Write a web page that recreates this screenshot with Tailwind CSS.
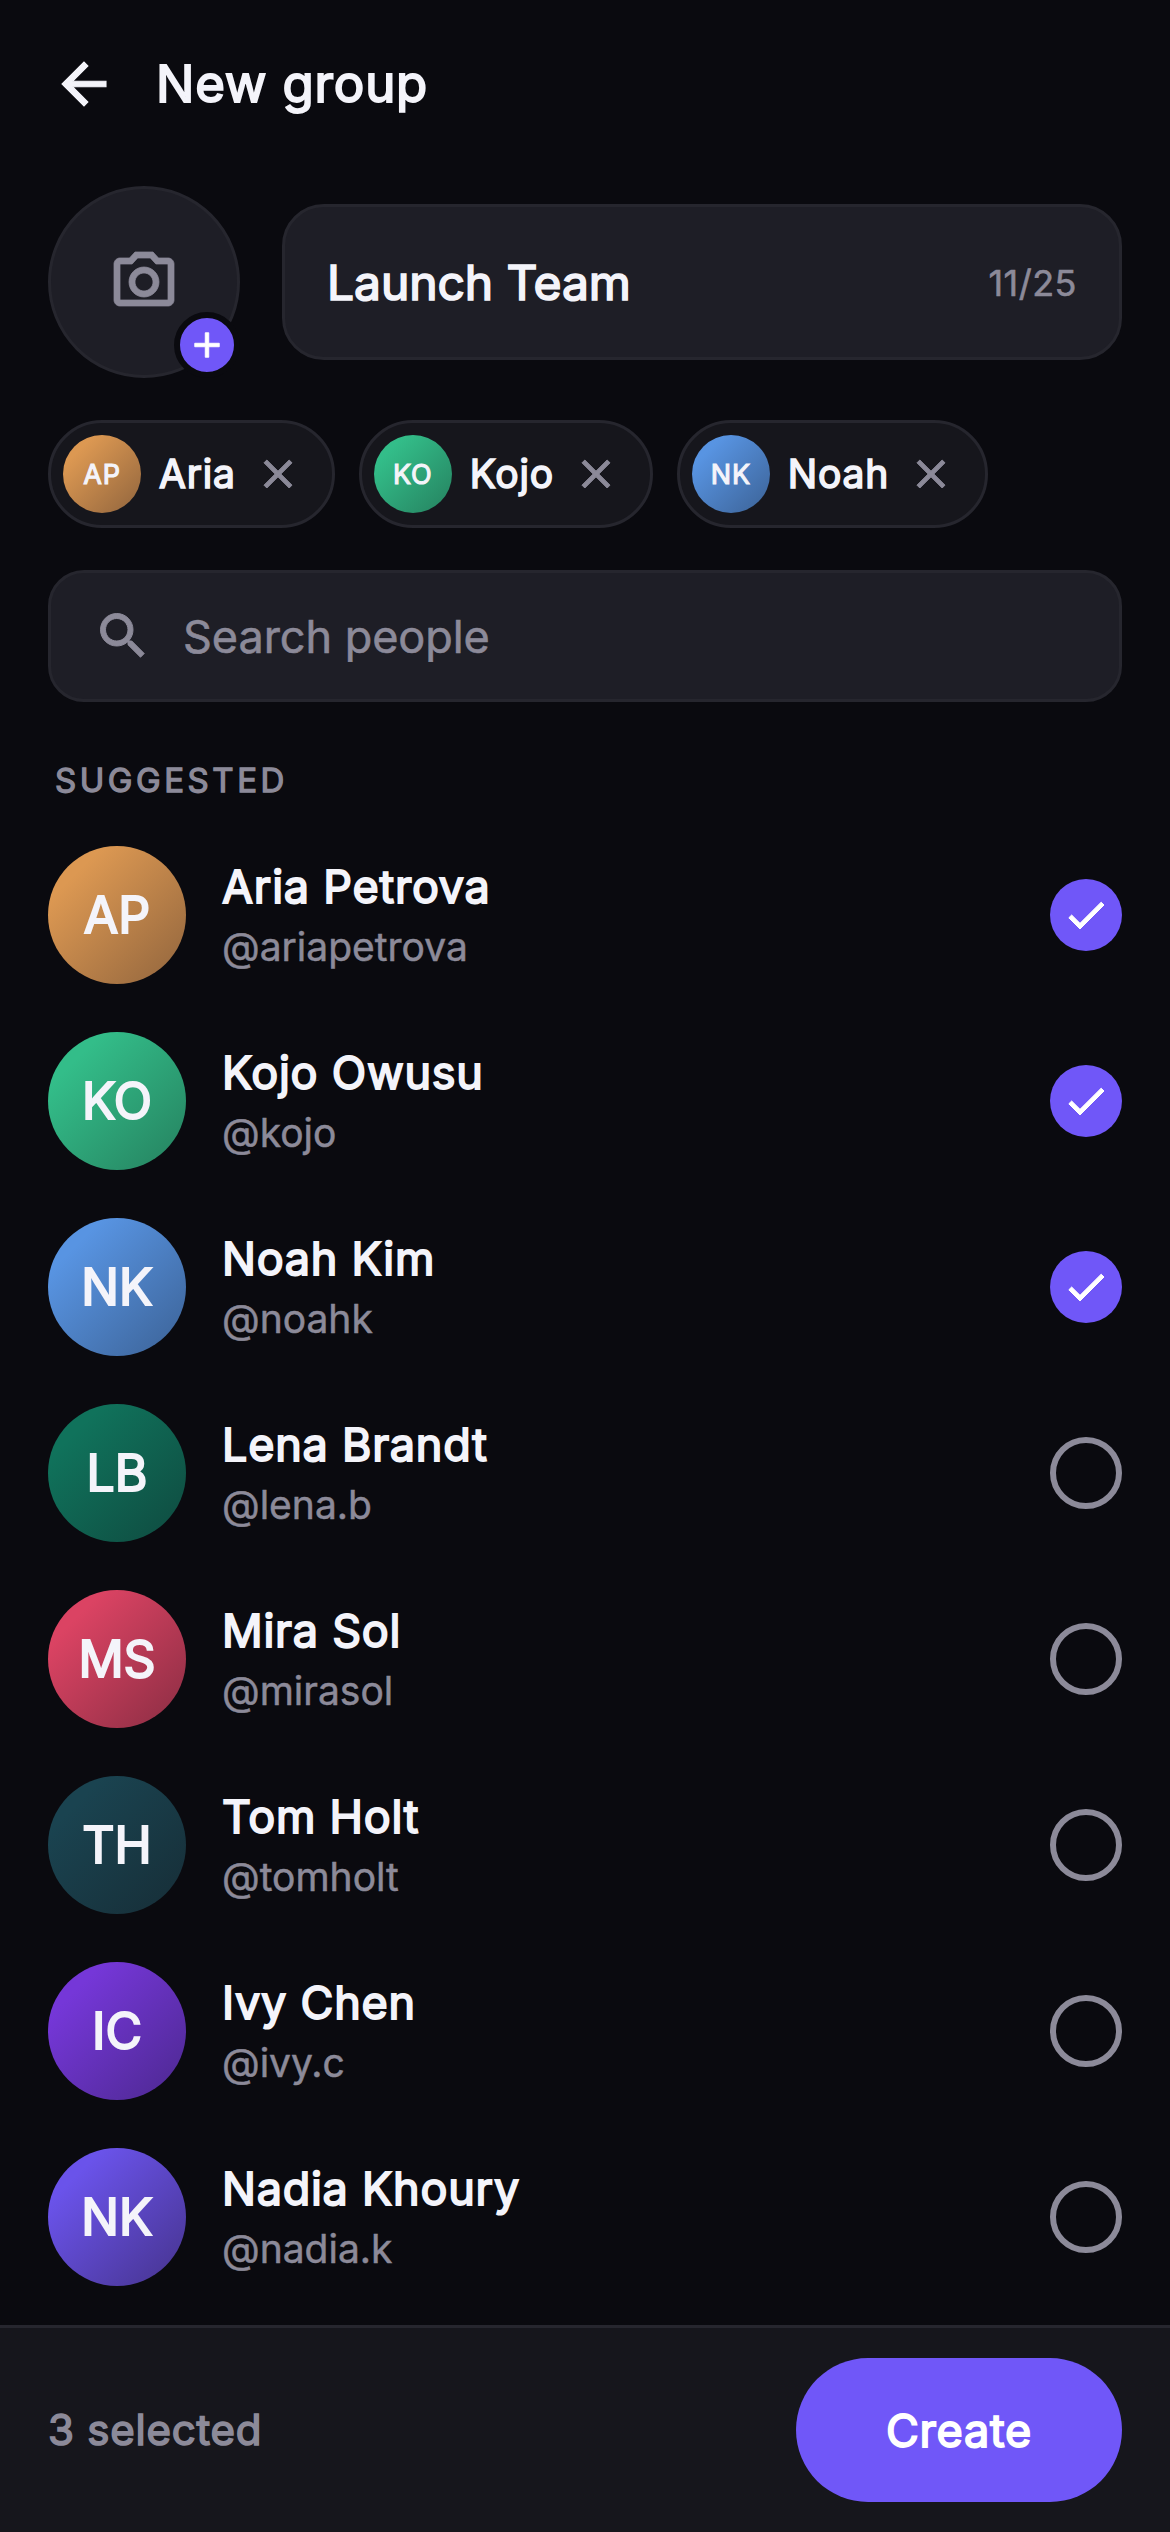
<!DOCTYPE html>
<html lang="en">
<head>
<meta charset="utf-8">
<title>New group</title>
<script src="https://cdn.jsdelivr.net/npm/@tailwindcss/browser@4"></script>
</head>
<body class="bg-[#0a0a0f]">
<div class="flex h-[2532px] w-[1170px] flex-col overflow-hidden bg-[#0a0a0f] font-['Inter',sans-serif] text-[#f4f4fa]">
  <header class="flex h-[168px] shrink-0 items-center pl-[51px]">
    <svg class="-mt-px size-[66px]" viewBox="0 0 24 24" fill="currentColor" stroke="currentColor" stroke-width=".4"><path d="M20 11H7.83l5.59-5.59L12 4l-8 8 8 8 1.41-1.41L7.83 13H20z"/></svg>
    <h1 class="ml-[39px] text-[51px] leading-[60px] tracking-[0.8px] [-webkit-text-stroke:1.9px]">New group</h1>
  </header>

  <section class="mt-[18px] flex shrink-0 items-center gap-[42px] px-12">
    <div class="relative flex size-48 shrink-0 items-center justify-center rounded-full border-3 border-[#26262e] bg-[#1e1e26] text-[#8c8a99]">
      <svg class="size-[72px]" viewBox="0 0 24 24" fill="currentColor" stroke="currentColor" stroke-width=".25"><path d="M14.12 4l1.83 2H20v12H4V6h4.05l1.83-2h4.24M15 2H9L7.17 4H4c-1.1 0-2 .9-2 2v12c0 1.1.9 2 2 2h16c1.1 0 2-.9 2-2V6c0-1.1-.9-2-2-2h-3.17L15 2zm-3 7c1.65 0 3 1.35 3 3s-1.35 3-3 3-3-1.35-3-3 1.35-3 3-3m0-2c-2.76 0-5 2.24-5 5s2.24 5 5 5 5-2.24 5-5-2.24-5-5-5z"/></svg>
      <span class="absolute -right-[3px] -bottom-[3px] flex size-[66px] items-center justify-center rounded-full border-6 border-[#0a0a0f] bg-[#7057f8] text-white"><svg class="size-[42px]" viewBox="0 0 24 24" fill="currentColor" stroke="currentColor" stroke-width=".5"><path d="M19 13h-6v6h-2v-6H5v-2h6V5h2v6h6z"/></svg></span>
    </div>
    <div class="flex h-[156px] flex-1 items-center justify-between rounded-[42px] border-3 border-[#26262e] bg-[#1e1e26] px-[42px] pt-0.5">
      <span class="text-[48px] leading-[60px] tracking-[-0.1px] [-webkit-text-stroke:1.7px]">Launch Team</span>
      <span class="text-[36px] leading-[44px] tracking-[0.5px] text-[#8c8a99] [-webkit-text-stroke:0.6px]">11/25</span>
    </div>
  </section>

  <section id="chips" class="mt-[42px] flex shrink-0 gap-6 px-12"></section>

  <div class="mx-12 mt-[42px] flex h-[132px] shrink-0 items-center rounded-[36px] border-3 border-[#26262e] bg-[#1e1e26] pl-[42px] text-[#8c8a99]">
    <svg class="size-[60px]" viewBox="0 0 24 24" fill="currentColor" stroke="currentColor" stroke-width=".4"><path d="M15.5 14h-.79l-.28-.27C15.41 12.59 16 11.11 16 9.5 16 5.91 13.09 3 9.5 3S3 5.91 3 9.5 5.91 16 9.5 16c1.61 0 3.09-.59 4.23-1.57l.27.28v.79l5 4.99L20.49 19l-4.99-5zm-6 0C7.01 14 5 11.99 5 9.5S7.01 5 9.5 5 14 7.01 14 9.5 11.99 14 9.5 14z"/></svg>
    <span class="ml-[30px] pt-0.5 text-[45px] leading-[60px] tracking-[-0.05px] [-webkit-text-stroke:0.6px]">Search people</span>
  </div>

  <h2 class="mt-14 shrink-0 pl-[55px] text-[33px] leading-[44px] tracking-[3.55px] text-[#8c8a99] [-webkit-text-stroke:1.3px]">SUGGESTED</h2>

  <main id="people" class="mt-5 flex shrink-0 flex-col"></main>

  <footer class="mt-auto flex h-[207px] shrink-0 items-center justify-between border-t-3 border-[#26262e] bg-[#16161c] px-12">
    <span class="text-[42px] leading-[60px] tracking-[0.77px] text-[#8c8a99] [-webkit-text-stroke:1.6px]">3 selected</span>
    <button class="flex h-36 w-[326px] items-center justify-center rounded-full bg-[#7057f8] pt-0.5 text-[45px] leading-[60px] tracking-[0.75px] text-white [-webkit-text-stroke:1.8px]">Create</button>
  </footer>
</div>
<script>
const people = [
  ['AP','Aria Petrova','@ariapetrova','linear-gradient(135deg,#dc9852 20%,#9a6b40 90%)'],
  ['KO','Kojo Owusu','@kojo','linear-gradient(135deg,#33bd89 20%,#278864 90%)'],
  ['NK','Noah Kim','@noahk','linear-gradient(135deg,#5894e2 20%,#3f689f 90%)'],
  ['LB','Lena Brandt','@lena.b','linear-gradient(135deg,#10725b 20%,#0f4f43 90%)'],
  ['MS','Mira Sol','@mirasol','linear-gradient(135deg,#db4363 20%,#943047 90%)'],
  ['TH','Tom Holt','@tomholt','linear-gradient(135deg,#1a4350 20%,#17303a 90%)'],
  ['IC','Ivy Chen','@ivy.c','linear-gradient(135deg,#7537d8 20%,#512a98 90%)'],
  ['NK','Nadia Khoury','@nadia.k','linear-gradient(135deg,#6a53ea 20%,#4a3798 90%)'],
];
document.getElementById('chips').innerHTML = people.slice(0, 3).map(([i, n, , g]) => `
  <div class="flex h-[108px] items-center rounded-full border-3 border-[#26262e] bg-[#16161c] pl-3 pr-[30px]">
    <span class="flex size-[78px] items-center justify-center rounded-full pt-0.5 text-[27px] tracking-[0.8px] [-webkit-text-stroke:1.1px]" style="background:${g}">${i}</span>
    <span class="ml-[18px] text-[39px] leading-[48px] tracking-[0.8px] [-webkit-text-stroke:1.6px]">${n.split(' ')[0]}</span>
    <svg class="ml-[18px] size-[48px] text-[#8c8a99]" viewBox="0 0 24 24" fill="currentColor" stroke="currentColor" stroke-width=".5"><path d="M19 6.41L17.59 5 12 10.59 6.41 5 5 6.41 10.59 12 5 17.59 6.41 19 12 13.41 17.59 19 19 17.59 13.41 12z"/></svg>
  </div>`).join('');
document.getElementById('people').innerHTML = people.map(([i, n, h, g], k) => `
  <div class="flex h-[186px] items-center px-12">
    <span class="flex size-[138px] items-center justify-center rounded-full text-[50px] [-webkit-text-stroke:2px]" style="background:${g}">${i}</span>
    <div class="ml-9 flex flex-1 flex-col gap-[3px]">
      <span class="text-[45px] leading-[60px] tracking-[0.75px] [-webkit-text-stroke:1.8px]">${n}</span>
      <span class="text-[39px] leading-[53px] text-[#8c8a99] [-webkit-text-stroke:0.5px]">${h}</span>
    </div>
    ${k < 3
      ? '<span class="flex size-[72px] items-center justify-center rounded-full bg-[#7057f8] text-white"><svg class="size-[48px]" viewBox="0 0 24 24" fill="currentColor" stroke="currentColor" stroke-width=".5"><path d="M9 16.17L4.83 12l-1.42 1.41L9 19 21 7l-1.41-1.41z"/></svg></span>'
      : '<span class="size-[72px] rounded-full border-6 border-[#8c8a99]"></span>'}
  </div>`).join('');
</script>
</body>
</html>
